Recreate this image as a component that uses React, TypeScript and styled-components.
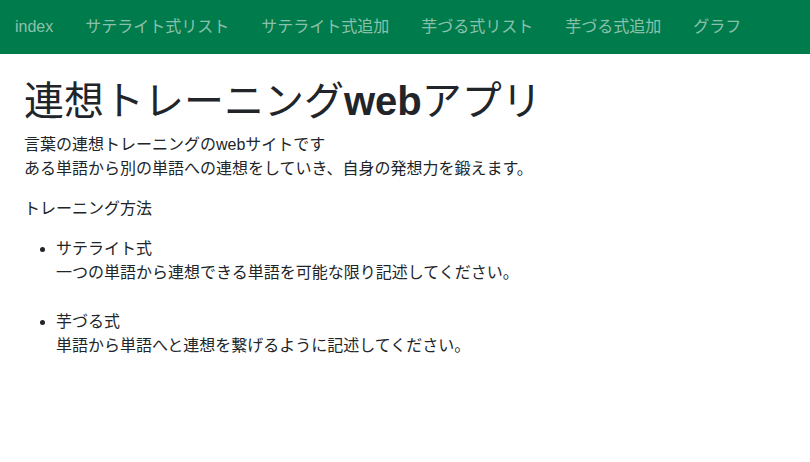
import React from "react";
import styled, { createGlobalStyle } from "styled-components";

const GlobalStyle = createGlobalStyle`
  * { box-sizing: border-box; }
  body {
    margin: 0;
    background: #fff;
    color: #212529;
    font-family: "Liberation Sans", "Noto Sans CJK JP", sans-serif;
    font-size: 16px;
    line-height: 24px;
  }
`;

const NavBar = styled.nav`
  height: 54px;
  background: #007b4c;
  display: flex;
  align-items: center;
  padding: 0 0 0 -1px;
`;

const NavLink = styled.a<{ first?: boolean }>`
  color: rgba(255, 255, 255, 0.55);
  text-decoration: none;
  font-size: 16px;
  line-height: 24px;
  padding: 0 16px 0 ${(p) => (p.first ? "15px" : "16px")};
  cursor: pointer;
  white-space: nowrap;
`;

const Main = styled.main`
  padding: 23px 24px 0;
`;

const Title = styled.h1`
  margin: 0 0 8px;
  font-size: 40px;
  line-height: 48px;
  font-weight: 400;
`;

const Latin = styled.span`
  font-weight: 700;
`;

const Text = styled.p`
  margin: 0 0 16px;
`;

const MethodList = styled.ul`
  margin: 0;
  padding-left: 32px;
  display: flex;
  flex-direction: column;
  gap: 25px;
`;

const Item = styled.li`
  padding-left: 0;
`;

const links = [
  "index",
  "サテライト式リスト",
  "サテライト式追加",
  "芋づる式リスト",
  "芋づる式追加",
  "グラフ",
];

export default function App() {
  return (
    <>
      <GlobalStyle />
      <NavBar>
        {links.map((l, i) => (
          <NavLink key={l} first={i === 0}>
            {l}
          </NavLink>
        ))}
      </NavBar>
      <Main>
        <Title>
          連想トレーニング<Latin>web</Latin>アプリ
        </Title>
        <Text>
          言葉の連想トレーニングのwebサイトです
          <br />
          ある単語から別の単語への連想をしていき、自身の発想力を鍛えます。
        </Text>
        <Text>トレーニング方法</Text>
        <MethodList>
          <Item>
            サテライト式
            <br />
            一つの単語から連想できる単語を可能な限り記述してください。
          </Item>
          <Item>
            芋づる式
            <br />
            単語から単語へと連想を繋げるように記述してください。
          </Item>
        </MethodList>
      </Main>
    </>
  );
}
